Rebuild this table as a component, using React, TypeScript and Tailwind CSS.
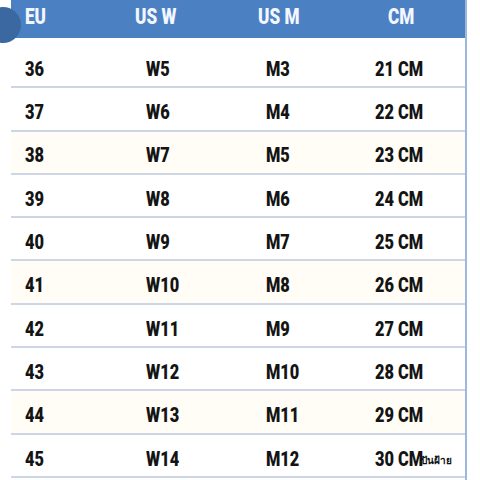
import React from 'react';

const rows = [
  ['36', 'W5', 'M3', '21 CM'],
  ['37', 'W6', 'M4', '22 CM'],
  ['38', 'W7', 'M5', '23 CM'],
  ['39', 'W8', 'M6', '24 CM'],
  ['40', 'W9', 'M7', '25 CM'],
  ['41', 'W10', 'M8', '26 CM'],
  ['42', 'W11', 'M9', '27 CM'],
  ['43', 'W12', 'M10', '28 CM'],
  ['44', 'W13', 'M11', '29 CM'],
  ['45', 'W14', 'M12', '30 CM'],
];

const font = { fontFamily: 'Roboto, "Liberation Sans", sans-serif' };

// Roboto black squeezed to look like a condensed face
const Narrow = ({ children }: { children: React.ReactNode }) => (
  <span className="inline-block scale-x-[0.78] origin-left whitespace-nowrap">{children}</span>
);

const App = () => {
  return (
    <div className="relative w-[480px] h-[480px] overflow-hidden bg-white" style={font}>
      {/* floating circle over the top-left corner */}
      <div className="absolute -left-[15px] top-[7px] w-[36px] h-[36px] rounded-full bg-[#3b68a0] z-10"></div>

      <div className="ml-[11px] w-[456px] h-full border-r-2 border-[#9db8dc]">
        {/* Header */}
        <div className="grid grid-cols-[124px_123px_130px_1fr] h-[38px] pb-[6px] bg-[#4b80c2] text-[#f2f6ff] text-[22px] font-black items-center">
          <div className="pl-[14px]"><Narrow>EU</Narrow></div>
          <div><Narrow>US W</Narrow></div>
          <div><Narrow>US M</Narrow></div>
          <div><Narrow>CM</Narrow></div>
        </div>

        <div className="h-[7px]"></div>

        {/* Rows */}
        {rows.map((row, i) => (
          <div
            key={row[0]}
            className={`grid grid-cols-[135px_120px_109px_1fr] h-[43.3px] pt-[8px] items-center border-b-2 border-[#cdd6e6] text-[21px] font-black text-[#141414] ${
              i % 3 === 2 ? 'bg-[#fffdf6]' : 'bg-white'
            }`}
          >
            <div className="pl-[14px]"><Narrow>{row[0]}</Narrow></div>
            <div><Narrow>{row[1]}</Narrow></div>
            <div><Narrow>{row[2]}</Narrow></div>
            <div><Narrow>{row[3]}</Narrow></div>
          </div>
        ))}
      </div>

      {/* watermark */}
      <div
        className="absolute left-[421px] top-[453px] text-[10px] font-bold text-[#111]"
        style={{ fontFamily: '"Noto Sans", "DejaVu Sans", sans-serif' }}
      >
        ปันฝ้าย
      </div>
    </div>
  );
};

export default App;
